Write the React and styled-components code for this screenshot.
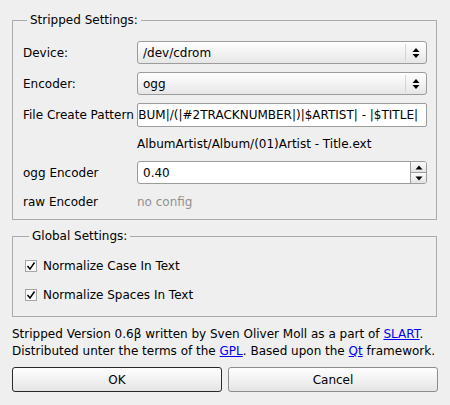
import styled, { createGlobalStyle } from 'styled-components';

const GlobalStyle = createGlobalStyle`
  html, body {
    margin: 0;
    padding: 0;
    background: #efefef;
  }
  body {
    font-family: "DejaVu Sans", "Liberation Sans", sans-serif;
    font-size: 12px;
    color: #000;
  }
`;

const Dialog = styled.div`
  width: 450px;
  height: 405px;
  box-sizing: border-box;
  padding: 13px 12px 0 12px;
  display: flex;
  flex-direction: column;
`;

const Group = styled.fieldset`
  margin: ${({ $top }) => $top || 0}px 1px 0 0;
  padding: ${({ $pad }) => $pad};
  border: 1px solid #ababab;
  border-radius: 0;
  min-width: 0;
`;

const Legend = styled.legend`
  padding: 0 3px;
  margin-left: 4px;
  line-height: 14px;
`;

const FormGrid = styled.div`
  display: grid;
  grid-template-columns: 114px minmax(0, 1fr);
  grid-template-rows: 23px 23px 24px 18px 23px 20px;
  row-gap: 8px;
  align-items: center;
`;

const Label = styled.div`
  white-space: nowrap;
  line-height: 14px;
`;

const Hint = styled.div`
  line-height: 14px;
  color: ${({ $muted }) => ($muted ? '#8f8f8f' : '#000')};
`;

const Combo = styled.div`
  height: 23px;
  box-sizing: border-box;
  border: 1px solid #9c9c9c;
  border-radius: 3px;
  background: linear-gradient(#fefefe, #f3f3f3 50%, #e6e6e6);
  display: flex;
  align-items: center;
`;

const ComboText = styled.div`
  flex: 1;
  padding-left: 5px;
`;

const ComboArrow = styled.div`
  width: 20px;
  height: 17px;
  border-left: 1px solid #d4d4d4;
  display: flex;
  align-items: center;
  justify-content: center;
`;

const LineEdit = styled.div`
  height: 24px;
  min-width: 0;
  box-sizing: border-box;
  border: 1px solid #9c9c9c;
  border-radius: 2px;
  background: #fff;
  padding: 0 8px 0 1px;
  display: flex;
  align-items: center;
`;

const Clip = styled.div`
  flex: 1;
  min-width: 0;
  overflow: hidden;
  display: flex;
  justify-content: flex-end;
  white-space: nowrap;
`;

const Spin = styled.div`
  height: 23px;
  box-sizing: border-box;
  border: 1px solid #9c9c9c;
  border-radius: 3px;
  background: #fff;
  display: flex;
  overflow: hidden;
`;

const SpinText = styled.div`
  flex: 1;
  padding-left: 5px;
  display: flex;
  align-items: center;
`;

const SpinButtons = styled.div`
  width: 15px;
  border-left: 1px solid #9c9c9c;
  display: flex;
  flex-direction: column;
`;

const SpinButton = styled.div`
  flex: 1;
  background: linear-gradient(#fbfbfb, #e4e4e4);
  display: flex;
  align-items: center;
  justify-content: center;
  & + & {
    border-top: 1px solid #9c9c9c;
  }
`;

const CheckList = styled.div`
  display: flex;
  flex-direction: column;
  gap: 15px;
`;

const CheckRow = styled.label`
  display: flex;
  align-items: center;
  gap: 6px;
  line-height: 14px;
`;

const Box = styled.span`
  width: 12px;
  height: 12px;
  box-sizing: border-box;
  border: 1px solid #a5a5a5;
  background: #fafafa;
  display: flex;
  align-items: center;
  justify-content: center;
`;

const About = styled.p`
  margin: 9px 0 0 0;
  line-height: 17px;
  white-space: nowrap;
`;

const Link = styled.a`
  color: #0000ee;
  text-decoration: underline;
`;

const Buttons = styled.div`
  margin-top: 7px;
  display: grid;
  grid-template-columns: 1fr 1fr;
  gap: 6px;
`;

const Button = styled.button`
  height: 25px;
  font: inherit;
  color: #000;
  border: 1px solid ${({ $default }) => ($default ? '#2a2a2a' : '#8c8c8c')};
  border-radius: 3px;
  background: linear-gradient(#fefefe, #f2f2f2 50%, #e4e4e4);
  padding: 0;
`;

function UpDown() {
  return (
    <svg width="8" height="12" viewBox="0 0 8 12" aria-hidden>
      <path d="M4 1 L7.5 5 H0.5 Z" fill="#000" />
      <path d="M4 11 L7.5 7 H0.5 Z" fill="#000" />
    </svg>
  );
}

function Tri({ down }) {
  return (
    <svg width="8" height="5" viewBox="0 0 8 5" aria-hidden>
      <path d={down ? 'M0.5 0.5 H7.5 L4 4.5 Z' : 'M4 0.5 L7.5 4.5 H0.5 Z'} fill="#000" />
    </svg>
  );
}

function Check() {
  return (
    <svg width="10" height="10" viewBox="0 0 10 10" aria-hidden>
      <path d="M1.5 5 L4 8 L8.5 1.5" fill="none" stroke="#000" strokeWidth="1.4" />
    </svg>
  );
}

function ComboBox({ value }) {
  return (
    <Combo>
      <ComboText>{value}</ComboText>
      <ComboArrow>
        <UpDown />
      </ComboArrow>
    </Combo>
  );
}

export default function App() {
  return (
    <>
      <GlobalStyle />
      <Dialog>
        <Group $pad="14px 9px 7px 10px">
          <Legend>Stripped Settings:</Legend>
          <FormGrid>
            <Label>Device:</Label>
            <ComboBox value="/dev/cdrom" />
            <Label>Encoder:</Label>
            <ComboBox value="ogg" />
            <Label>File Create Pattern</Label>
            <LineEdit>
              <Clip>|$ALBUMARTIST|/|$ALBUM|/(|#2TRACKNUMBER|)|$ARTIST| - |$TITLE|</Clip>
            </LineEdit>
            <span />
            <Hint>AlbumArtist/Album/(01)Artist - Title.ext</Hint>
            <Label>ogg Encoder</Label>
            <Spin>
              <SpinText>0.40</SpinText>
              <SpinButtons>
                <SpinButton>
                  <Tri />
                </SpinButton>
                <SpinButton>
                  <Tri down />
                </SpinButton>
              </SpinButtons>
            </Spin>
            <Label>raw Encoder</Label>
            <Hint $muted>no config</Hint>
          </FormGrid>
        </Group>
        <Group $top={9} $pad="16px 10px 14px 12px">
          <Legend>Global Settings:</Legend>
          <CheckList>
            <CheckRow>
              <Box>
                <Check />
              </Box>
              Normalize Case In Text
            </CheckRow>
            <CheckRow>
              <Box>
                <Check />
              </Box>
              Normalize Spaces In Text
            </CheckRow>
          </CheckList>
        </Group>
        <About>
          Stripped Version 0.6β written by Sven Oliver Moll as a part of <Link href="#">SLART</Link>.
          <br />
          Distributed unter the terms of the <Link href="#">GPL</Link>. Based upon the{' '}
          <Link href="#">Qt</Link> framework.
        </About>
        <Buttons>
          <Button $default>OK</Button>
          <Button>Cancel</Button>
        </Buttons>
      </Dialog>
    </>
  );
}
